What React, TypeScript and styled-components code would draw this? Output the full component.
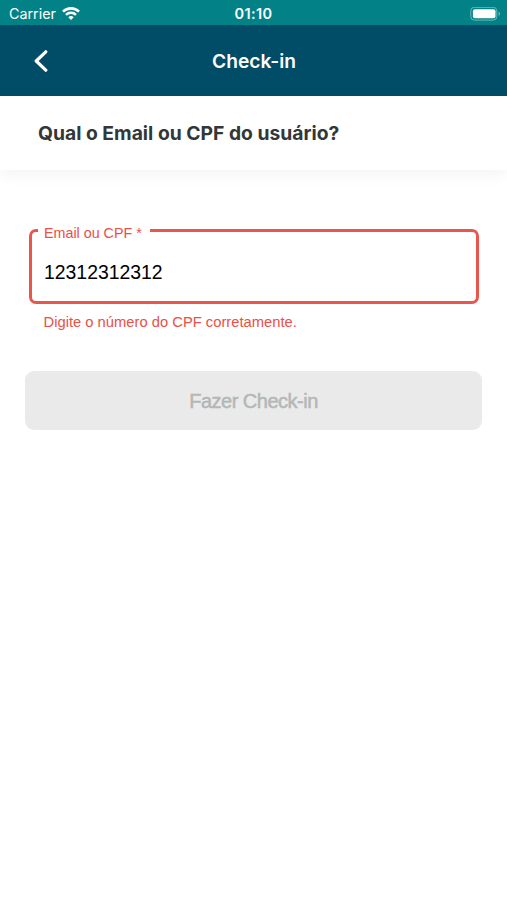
import styled, { createGlobalStyle } from "styled-components";

const GlobalStyle = createGlobalStyle`
  * {
    box-sizing: border-box;
  }

  body {
    margin: 0;
    background: #ffffff;
    font-family: "Liberation Sans", Arial, sans-serif;
  }
`;

export default function App() {
  return (
    <>
      <GlobalStyle />
      <Screen>
        <StatusBar>
          <Carrier>
            Carrier
            <WifiIcon />
          </Carrier>
          <Clock>01:10</Clock>
          <BatteryIcon />
        </StatusBar>

        <Header>
          <BackButton aria-label="Voltar">
            <svg width="14" height="22" viewBox="0 0 14 22" fill="none">
              <path
                d="M11.8 1.8L2.2 11l9.6 9.2"
                stroke="#ffffff"
                strokeWidth="3.2"
                strokeLinecap="round"
                strokeLinejoin="round"
              />
            </svg>
          </BackButton>
          <HeaderTitle>Check-in</HeaderTitle>
        </Header>

        <Question>Qual o Email ou CPF do usuário?</Question>

        <Form>
          <Field>
            <FieldLabel>Email ou CPF *</FieldLabel>
            <FieldValue>12312312312</FieldValue>
          </Field>
          <ErrorText>Digite o número do CPF corretamente.</ErrorText>
          <SubmitButton disabled>Fazer Check-in</SubmitButton>
        </Form>
      </Screen>
    </>
  );
}

const WifiIcon = () => (
  <svg width="18" height="14" viewBox="0 0 18 14" fill="none">
    <path d="M1 4.6a11.5 11.5 0 0 1 16 0" stroke="#fff" strokeWidth="2.6" />
    <path d="M4 7.8a7.2 7.2 0 0 1 10 0" stroke="#fff" strokeWidth="2.5" />
    <path d="M6.3 10.3a3.9 3.9 0 0 1 5.4 0L9 13.1z" fill="#fff" />
  </svg>
);

const BatteryIcon = () => (
  <svg width="31" height="14" viewBox="0 0 31 14" fill="none">
    <rect x="0.8" y="0.3" width="26" height="12.8" rx="3.6" stroke="#6db9bb" />
    <rect x="2.9" y="2.2" width="22.6" height="9" rx="2" fill="#fff" />
    <path d="M28.6 4.5c2 .8 2 3.6 0 4.4z" fill="#6db9bb" />
  </svg>
);

const Screen = styled.main`
  width: 100%;
  min-height: 900px;
  background: #ffffff;
`;

const StatusBar = styled.div`
  display: grid;
  grid-template-columns: 1fr auto 1fr;
  align-items: center;
  height: 25px;
  padding: 2px 6px 0;
  background: #028287;
  color: #ffffff;

  > svg {
    justify-self: end;
  }
`;

const Carrier = styled.div`
  display: flex;
  align-items: center;
  gap: 6px;
  padding-left: 3px;
  font: 400 14.3px "Inter", sans-serif;
`;

const Clock = styled.time`
  font: 600 14.5px "Inter", sans-serif;
  letter-spacing: 0.4px;
`;

const Header = styled.header`
  display: grid;
  grid-template-columns: 60px 1fr 60px;
  align-items: center;
  height: 71px;
  background: #014d68;
`;

const BackButton = styled.button`
  display: flex;
  justify-content: flex-end;
  padding: 0 12px 0 0;
  border: 0;
  background: none;
`;

const HeaderTitle = styled.h1`
  margin: 0;
  padding: 1px 0 0 1px;
  color: #ffffff;
  font: 600 19.2px "Inter", sans-serif;
  text-align: center;
`;

const Question = styled.h2`
  display: flex;
  align-items: center;
  height: 74px;
  margin: 0;
  padding: 0 38px 1px;
  color: #333737;
  font: 700 19.3px "Inter", sans-serif;
  box-shadow: 0 4px 16px rgba(0, 0, 0, 0.05);
`;

const Form = styled.form`
  display: flex;
  flex-direction: column;
  padding: 50px 25px 0;
`;

const Field = styled.fieldset`
  height: 84px;
  margin: 0 3px 0 4px;
  padding: 0 6px;
  border: 3px solid #e8564e;
  border-radius: 7px;
`;

const FieldLabel = styled.legend`
  padding: 5px 8px 0 6px;
  color: #ea5048;
  font-size: 14.3px;
  line-height: 16px;
`;

const FieldValue = styled.div`
  padding: 19px 6px 0;
  color: #000000;
  font-size: 19.4px;
  line-height: 24px;
`;

const ErrorText = styled.p`
  margin: 9px 18.5px 0;
  color: #ea5048;
  font-size: 14.75px;
  line-height: 18px;
`;

const SubmitButton = styled.button`
  height: 59px;
  margin-top: 40px;
  padding-top: 3px;
  border: 0;
  border-radius: 9px;
  background: #eaeaea;
  color: #b3b7b6;
  font: 400 20px "Liberation Sans", Arial, sans-serif;
  letter-spacing: -0.5px;
  -webkit-text-stroke: 0.5px #b3b7b6;
`;
